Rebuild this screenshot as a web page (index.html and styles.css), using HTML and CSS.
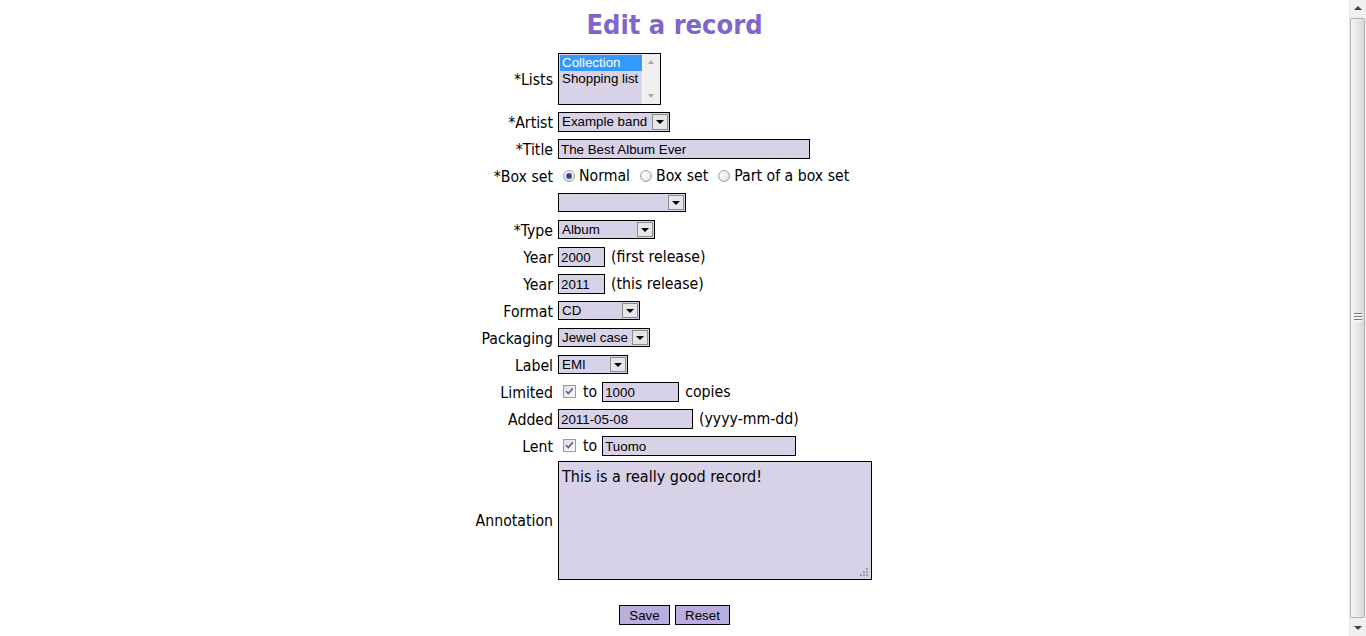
FILE: index.html
```html
<!DOCTYPE html>
<html lang="en">
<head>
<meta charset="utf-8">
<title>Edit a record</title>
<link rel="stylesheet" href="styles.css">
</head>
<body>
<main class="page">
  <h1 class="title">Edit a record</h1>
  <form class="form">
    <div class="grid">
      <div class="lbl">*Lists</div>
      <div class="fld">
        <div class="listbox">
          <div class="opts">
            <div class="opt opt-sel">Collection</div>
            <div class="opt">Shopping list</div>
          </div>
          <div class="lb-bar"><span class="lb-up"></span><span class="lb-down"></span></div>
        </div>
      </div>

      <div class="lbl">*Artist</div>
      <div class="fld"><div class="select w-artist tall"><span class="sv">Example band</span><span class="arrow"></span></div></div>

      <div class="lbl">*Title</div>
      <div class="fld"><input class="text w-title" type="text" value="The Best Album Ever"></div>

      <div class="lbl">*Box set</div>
      <div class="fld radios">
        <span class="radio checked"></span><span class="rtext">Normal</span>
        <span class="radio"></span><span class="rtext">Box set</span>
        <span class="radio"></span><span class="rtext">Part of a box set</span>
      </div>

      <div class="lbl"></div>
      <div class="fld"><div class="select w-box"><span class="sv"></span><span class="arrow"></span></div></div>

      <div class="lbl">*Type</div>
      <div class="fld"><div class="select w-type"><span class="sv">Album</span><span class="arrow"></span></div></div>

      <div class="lbl">Year</div>
      <div class="fld"><input class="text w-year" type="text" value="2000"><span class="note">(first release)</span></div>

      <div class="lbl">Year</div>
      <div class="fld"><input class="text w-year" type="text" value="2011"><span class="note">(this release)</span></div>

      <div class="lbl">Format</div>
      <div class="fld"><div class="select w-format"><span class="sv">CD</span><span class="arrow"></span></div></div>

      <div class="lbl">Packaging</div>
      <div class="fld"><div class="select w-pack"><span class="sv">Jewel case</span><span class="arrow"></span></div></div>

      <div class="lbl">Label</div>
      <div class="fld"><div class="select w-label"><span class="sv">EMI</span><span class="arrow"></span></div></div>

      <div class="lbl">Limited</div>
      <div class="fld">
        <span class="check"><svg viewBox="0 0 13 13" width="13" height="13"><path d="M3 6.2 L5.3 8.6 L9.8 3.4" fill="none" stroke="#56698e" stroke-width="1.7"/></svg></span>
        <span class="to">to</span>
        <input class="text w-limit" type="text" value="1000"><span class="note">copies</span>
      </div>

      <div class="lbl">Added</div>
      <div class="fld"><input class="text w-added" type="text" value="2011-05-08"><span class="note">(yyyy-mm-dd)</span></div>

      <div class="lbl">Lent</div>
      <div class="fld">
        <span class="check"><svg viewBox="0 0 13 13" width="13" height="13"><path d="M3 6.2 L5.3 8.6 L9.8 3.4" fill="none" stroke="#56698e" stroke-width="1.7"/></svg></span>
        <span class="to">to</span>
        <input class="text w-lent" type="text" value="Tuomo">
      </div>

      <div class="lbl">Annotation</div>
      <div class="fld">
        <div class="ta-wrap">
          <textarea class="ta">This is a really good record!</textarea>
          <svg class="grip" viewBox="0 0 11 11" width="11" height="11">
            <rect x="8" y="2" width="2" height="2" fill="#9c9c9c"/>
            <rect x="5" y="5" width="2" height="2" fill="#9c9c9c"/>
            <rect x="8" y="5" width="2" height="2" fill="#9c9c9c"/>
            <rect x="2" y="8" width="2" height="2" fill="#9c9c9c"/>
            <rect x="5" y="8" width="2" height="2" fill="#9c9c9c"/>
            <rect x="8" y="8" width="2" height="2" fill="#9c9c9c"/>
          </svg>
        </div>
      </div>
    </div>
    <div class="actions">
      <button class="btn btn-save" type="button">Save</button>
      <button class="btn btn-reset" type="button">Reset</button>
    </div>
  </form>
</main>
<div class="vscroll" aria-hidden="true">
  <div class="vs-btn vs-up"><span class="tri-up"></span></div>
  <div class="vs-track">
    <div class="vs-thumb"><span class="vs-grip"></span></div>
  </div>
  <div class="vs-btn vs-down"><span class="tri-down"></span></div>
</div>
</body>
</html>
```

FILE: styles.css
```css
html, body {
  margin: 0;
  padding: 0;
  background: #ffffff;
  overflow: hidden;
}

body {
  font-family: "DejaVu Sans Condensed", "DejaVu Sans", sans-serif;
  font-size: 15.7px;
  color: #000;
}

.page {
  width: 1349px;
  height: 636px;
}

.title {
  margin: 9px 0 9px;
  height: 32px;
  line-height: 32px;
  text-align: center;
  font-size: 27px;
  font-weight: bold;
  color: #8066c8;
}

.form {
  margin: 0;
}

.grid {
  display: grid;
  grid-template-columns: 79px 317px;
  grid-template-rows: 57px repeat(13, 25px) 120px;
  column-gap: 5px;
  row-gap: 2px;
  justify-content: center;
}

.lbl {
  display: flex;
  align-items: center;
  justify-content: flex-end;
  white-space: nowrap;
  padding-top: 1px;
}

.fld {
  display: flex;
  align-items: center;
  white-space: nowrap;
}

/* list box */
.listbox {
  box-sizing: border-box;
  width: 103px;
  height: 52px;
  border: 1px solid #000;
  background: #d8d2e8;
  display: flex;
}

.opts {
  flex: 1;
  padding: 1px 0 0 1px;
  font-family: "Liberation Sans", Arial, sans-serif;
  font-size: 13.33px;
}

.opt {
  height: 16px;
  line-height: 16px;
  padding-left: 2px;
}

.opt-sel {
  background: #3399ff;
  color: #fff;
}

.lb-bar {
  width: 17px;
  background: #efefef;
  border-left: 1px solid #f7f7f7;
  position: relative;
}

.lb-up, .lb-down {
  position: absolute;
  left: 5px;
  width: 0;
  height: 0;
  border-left: 3.5px solid transparent;
  border-right: 3.5px solid transparent;
}

.lb-up {
  top: 6px;
  border-bottom: 4px solid #a8a8a8;
}

.lb-down {
  bottom: 6px;
  border-top: 4px solid #a8a8a8;
}

/* selects */
.select {
  box-sizing: border-box;
  height: 19px;
  border: 1px solid #000;
  background: #d8d2e8;
  display: flex;
  align-items: stretch;
  font-family: "Liberation Sans", Arial, sans-serif;
  font-size: 13.33px;
}

.select.tall {
  height: 20px;
}

.sv {
  flex: 1;
  padding-left: 3px;
  display: flex;
  align-items: center;
  overflow: hidden;
}

.arrow {
  box-sizing: border-box;
  width: 16px;
  margin: 1px;
  border: 1px solid #8c8c8c;
  background: #e6e6e6;
  position: relative;
}

.arrow::after {
  content: "";
  position: absolute;
  left: 3px;
  top: 50%;
  margin-top: -2px;
  width: 0;
  height: 0;
  border-left: 4px solid transparent;
  border-right: 4px solid transparent;
  border-top: 4px solid #000;
}

.w-artist { width: 112px; }
.w-box { width: 128px; }
.w-type { width: 97px; }
.w-format { width: 82px; }
.w-pack { width: 92px; }
.w-label { width: 70px; }

/* text inputs */
.text {
  box-sizing: border-box;
  height: 20px;
  margin: 0;
  padding: 1px 2px 0;
  border: 1px solid #000;
  background: #d8d2e8;
  font-family: "Liberation Sans", Arial, sans-serif;
  font-size: 13.33px;
  color: #000;
  outline: none;
}

.w-title { width: 252px; }
.w-year { width: 47px; }
.w-limit { width: 77px; }
.w-added { width: 135px; }
.w-lent { width: 194px; }

.note {
  margin-left: 6px;
}

/* radios */
.radio {
  box-sizing: border-box;
  width: 12px;
  height: 12px;
  border-radius: 50%;
  border: 1px solid #a3a3a3;
  background: radial-gradient(circle at 40% 35%, #ffffff 0, #f2f2f2 40%, #d4d4d4 100%);
  margin-left: 5px;
  margin-right: 4px;
  flex: none;
}

.radio.checked {
  background:
    radial-gradient(circle at 50% 50%, #203c88 0, #2d4c9c 2px, #7d8fbf 3px, transparent 3.6px),
    radial-gradient(circle at 40% 35%, #ffffff 0, #f2f2f2 40%, #d4d4d4 100%);
}

.rtext {
  margin-right: 5px;
}

/* checkbox */
.check {
  box-sizing: border-box;
  width: 13px;
  height: 13px;
  margin-left: 5px;
  border: 1px solid #9a9a9a;
  background: linear-gradient(135deg, #dcdcdc, #ffffff);
  display: flex;
  align-items: center;
  justify-content: center;
  flex: none;
}

.check svg {
  display: block;
  margin: -1px;
}

.to {
  margin-left: 7px;
  margin-right: 5px;
}

/* textarea */
.ta-wrap {
  position: relative;
  width: 314px;
  height: 119px;
}

.ta {
  box-sizing: border-box;
  display: block;
  width: 314px;
  height: 119px;
  margin: 0;
  padding: 5px 3px 3px;
  border: 1px solid #000;
  background: #d8d2e8;
  font-family: "DejaVu Sans Condensed", "DejaVu Sans", sans-serif;
  font-size: 16px;
  line-height: 20px;
  color: #000;
  resize: none;
  outline: none;
}

.grip {
  position: absolute;
  right: 3px;
  bottom: 3px;
}

/* buttons */
.actions {
  display: flex;
  justify-content: center;
  gap: 5px;
  margin-top: 25px;
}

.btn {
  box-sizing: border-box;
  height: 20px;
  margin: 0;
  padding: 0;
  border: 1px solid #000;
  background: #b9aee0;
  font-family: "Liberation Sans", Arial, sans-serif;
  font-size: 13.33px;
  color: #000;
}

.btn-save { width: 51px; }
.btn-reset { width: 55px; }

/* page scrollbar */
.vscroll {
  position: fixed;
  top: 0;
  right: 0;
  width: 17px;
  height: 636px;
  background: #f0f0f0;
  border-left: 1px solid #e8e8e8;
  box-sizing: border-box;
  display: flex;
  flex-direction: column;
}

.vs-btn {
  height: 17px;
  position: relative;
  flex: none;
}

.tri-up, .tri-down {
  position: absolute;
  left: 4px;
  width: 0;
  height: 0;
  border-left: 4px solid transparent;
  border-right: 4px solid transparent;
}

.tri-up {
  top: 6px;
  border-bottom: 4px solid #404040;
}

.tri-down {
  top: 7px;
  border-top: 4px solid #404040;
}

.vs-track {
  flex: 1;
  padding: 1px 0;
  display: flex;
}

.vs-thumb {
  flex: 1;
  margin: 0 1px 0 0;
  border: 1px solid #b3b3b3;
  border-radius: 2px;
  background: linear-gradient(to right, #f5f5f5, #e7e7e7 50%, #d8d8d8);
  position: relative;
}

.vs-grip {
  position: absolute;
  left: 3px;
  top: 50%;
  margin-top: -5px;
  width: 8px;
  height: 9px;
  background: repeating-linear-gradient(to bottom, #7a7a7a 0, #7a7a7a 1px, #f4f4f4 1px, #f4f4f4 3px);
}
```
